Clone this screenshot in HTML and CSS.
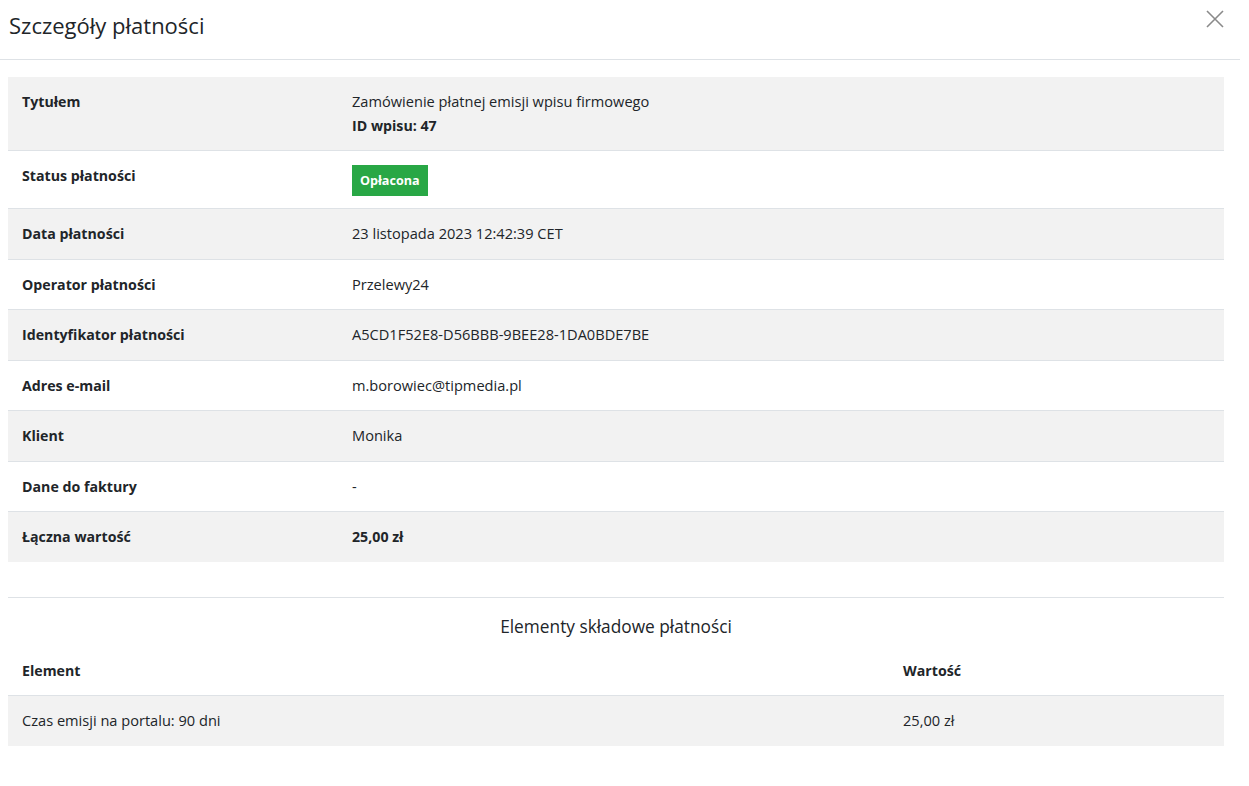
FILE: index.html
```html
<!DOCTYPE html>
<html lang="pl">
<head>
  <meta charset="UTF-8">
  <title>Szczegóły płatności</title>
  <link rel="stylesheet" href="styles.css">
</head>
<body>
<div class="modal">
  <div class="modal-header">
    <h4 class="modal-title">Szczegóły płatności</h4>
    <button class="close" aria-label="Zamknij">
      <svg width="18" height="18" viewBox="0 0 18 18"><path d="M1 1L17 17M17 1L1 17" stroke="#8a8a8a" stroke-width="1.6" fill="none"/></svg>
    </button>
  </div>

  <div class="modal-body">
    <table class="details">
      <tr class="odd">
        <th>Tytułem</th>
        <td>Zamówienie płatnej emisji wpisu firmowego<br><strong>ID wpisu: 47</strong></td>
      </tr>
      <tr>
        <th>Status płatności</th>
        <td class="status"><span class="badge">Opłacona</span></td>
      </tr>
      <tr class="odd">
        <th>Data płatności</th>
        <td>23 listopada 2023 12:42:39 CET</td>
      </tr>
      <tr>
        <th>Operator płatności</th>
        <td>Przelewy24</td>
      </tr>
      <tr class="odd">
        <th>Identyfikator płatności</th>
        <td>A5CD1F52E8-D56BBB-9BEE28-1DA0BDE7BE</td>
      </tr>
      <tr>
        <th>Adres e-mail</th>
        <td>m.borowiec@tipmedia.pl</td>
      </tr>
      <tr class="odd">
        <th>Klient</th>
        <td>Monika</td>
      </tr>
      <tr>
        <th>Dane do faktury</th>
        <td>-</td>
      </tr>
      <tr class="odd">
        <th>Łączna wartość</th>
        <td><strong>25,00 zł</strong></td>
      </tr>
    </table>

    <hr>

    <h5 class="section-title">Elementy składowe płatności</h5>

    <table class="items">
      <thead>
        <tr>
          <th>Element</th>
          <th>Wartość</th>
        </tr>
      </thead>
      <tbody>
        <tr class="odd">
          <td>Czas emisji na portalu: 90 dni</td>
          <td>25,00 zł</td>
        </tr>
      </tbody>
    </table>
  </div>
</div>
</body>
</html>
```

FILE: styles.css
```css
body {
  margin: 0;
  font-family: "Segoe UI", "Open Sans", "Noto Sans", sans-serif;
  font-size: 14.6px;
  color: #212529;
  background: #fff;
}
.modal {
  width: 1240px;
}
.modal-header {
  display: flex;
  align-items: center;
  justify-content: space-between;
  height: 59px;
  padding: 0 16px 0 9px;
  border-bottom: 1px solid #dee2e6;
}
.modal-title {
  margin: 0 0 9px 0;
  font-size: 22px;
  font-weight: 400;
}
.close {
  background: none;
  border: none;
  padding: 0;
  margin: 0 0 18px 0;
  cursor: pointer;
}
.modal-body {
  padding: 17px 16px 0 8px;
}
table {
  width: 100%;
  border-collapse: collapse;
  table-layout: fixed;
}
th, td {
  box-sizing: border-box;
  text-align: left;
  vertical-align: top;
  padding: 13px 14px;
  line-height: 23.5px;
}
th {
  font-weight: 700;
  font-size: 14.2px;
}
.details tr + tr {
  border-top: 1px solid #dee2e6;
}
.details th {
  width: 330px;
}
.odd {
  background: #f2f2f2;
}
strong {
  font-weight: 700;
  font-size: 14.2px;
}
.badge {
  display: inline-block;
  background: #28a745;
  color: #fff;
  font-size: 12.6px;
  font-weight: 700;
  line-height: 31px;
  padding: 0 8px;
}
.status {
  line-height: 31px;
  padding-bottom: 12px;
}
hr {
  border: 0;
  border-top: 1px solid #dee2e6;
  margin: 35px 0 0 0;
}
.section-title {
  margin: 17px 0 7px 0;
  text-align: center;
  font-size: 17.3px;
  font-weight: 400;
  line-height: 24px;
}
.items thead tr {
  border-bottom: 1px solid #dee2e6;
}
.items th:first-child {
  width: 881px;
}
```
